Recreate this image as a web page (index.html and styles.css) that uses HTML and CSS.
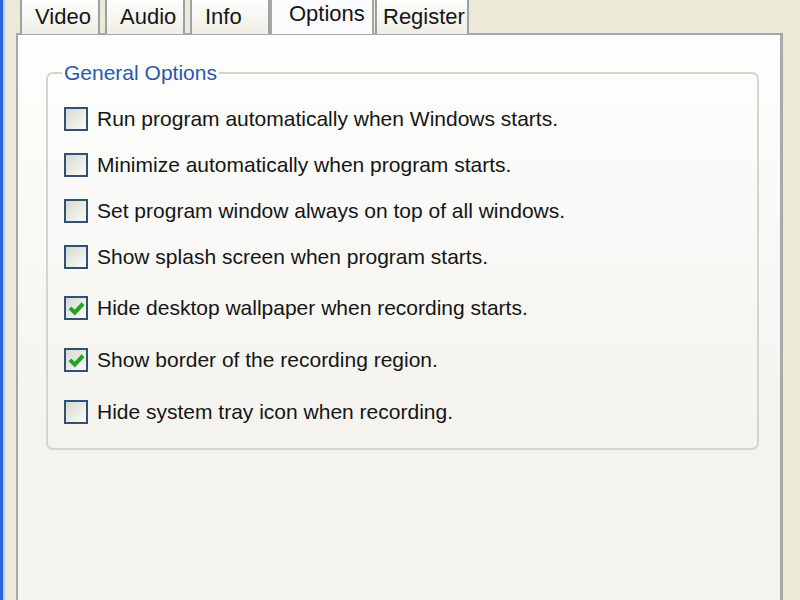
FILE: index.html
```html
<!DOCTYPE html>
<html lang="en">
<head>
    <meta charset="UTF-8">
    <title>Options</title>
    <link rel="stylesheet" href="styles.css">
</head>
<body>
    <div class="window">
        <div class="edge"></div>
        <div class="content">
            <ul class="tabs">
                <li class="tab">Video</li>
                <li class="tab">Audio</li>
                <li class="tab">Info</li>
                <li class="tab active">Options</li>
                <li class="tab">Register</li>
            </ul>
            <div class="panel">
                <fieldset class="group">
                    <legend>General Options</legend>
                    <div class="row"><span class="box"></span>Run program automatically when Windows starts.</div>
                    <div class="row"><span class="box"></span>Minimize automatically when program starts.</div>
                    <div class="row"><span class="box"></span>Set program window always on top of all windows.</div>
                    <div class="row"><span class="box"></span>Show splash screen when program starts.</div>
                    <div class="row wide first"><span class="box"><svg viewBox="0 0 16 16"><path d="M2.5 7.5 L6.5 11.5 L13.5 4" /></svg></span>Hide desktop wallpaper when recording starts.</div>
                    <div class="row wide"><span class="box"><svg viewBox="0 0 16 16"><path d="M2.5 7.5 L6.5 11.5 L13.5 4" /></svg></span>Show border of the recording region.</div>
                    <div class="row wide"><span class="box"></span>Hide system tray icon when recording.</div>
                </fieldset>
            </div>
        </div>
    </div>
</body>
</html>
```

FILE: styles.css
```css
body {
    margin: 0;
    background-color: #ece9d8;
    font-family: "Liberation Sans", Arial, sans-serif;
    font-size: 21px;
    color: #151515;
}

.window {
    display: flex;
    height: 600px;
    overflow: hidden;
}

.edge {
    width: 3px;
    background-color: #2a62d9;
    border-right: 2px solid #b6d0f2;
}

.content {
    flex: 1;
    padding-left: 11px;
    padding-right: 17px;
    display: flex;
    flex-direction: column;
}

.tabs {
    list-style: none;
    margin: 0 0 0 4px;
    padding: 0;
    display: flex;
    align-items: flex-end;
    height: 34px;
    position: relative;
    z-index: 1;
    font-size: 22px;
}

.tab {
    width: 80px;
    height: 40px;
    margin-right: 5px;
    box-sizing: border-box;
    padding-left: 13px;
    padding-top: 8px;
    border: 2px solid #9aa3a4;
    border-bottom: none;
    border-radius: 3px 3px 0 0;
    background: linear-gradient(#ffffff, #efeee5);
}

.tab.active {
    width: 104px;
    height: 44px;
    margin-left: -5px;
    margin-right: 1px;
    padding-left: 17px;
    padding-top: 9px;
    background: #fcfcfe;
    border-color: #a7a9a0;
}

.tab:last-child {
    width: 94px;
    padding-left: 6px;
}

.panel {
    flex: 1;
    border: 2px solid #a3a8a8;
    border-right: 3px solid #a7aaa6;
    border-bottom: none;
    background: linear-gradient(#fefefe, #f4f3ee 70%);
    padding: 26px 21px 0 28px;
    margin-top: -1px;
}

.group {
    margin: 0;
    border: 2px solid #d6d5cb;
    border-radius: 7px;
    padding: 11px 0 10px 16px;
}

.group legend {
    color: #2859aa;
    padding: 0 2px;
    margin-left: -2px;
}

.row {
    display: flex;
    align-items: center;
    height: 46px;
}

.row.wide {
    height: 52px;
}

.row.first {
    margin-top: 2px;
}

.box {
    width: 20px;
    height: 20px;
    border: 2px solid #2f5172;
    margin-right: 9px;
    background: linear-gradient(135deg, #d9d9d2, #fbfbf8);
    display: flex;
    align-items: center;
    justify-content: center;
}

.box svg {
    width: 19px;
    height: 19px;
}

.box path {
    fill: none;
    stroke: #21a32a;
    stroke-width: 3.4;
}
```
